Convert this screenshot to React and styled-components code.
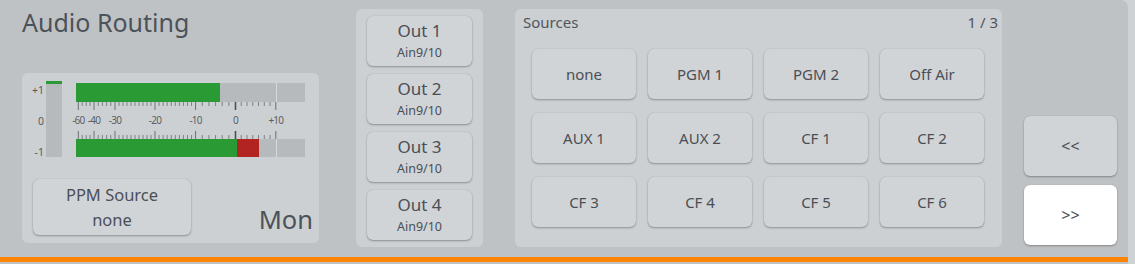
import React from "react";
import styled, { createGlobalStyle } from "styled-components";

const Global = createGlobalStyle`
  html, body {
    margin: 0;
    padding: 0;
    background: #cfd2d4;
    font-family: "Noto Sans", "Open Sans", sans-serif;
    color: #4a4f56;
  }
`;

const Frame = styled.div`
  width: 1128px;
  height: 264px;
  background: #bfc2c4;
  border-top-right-radius: 7px;
  display: flex;
  flex-direction: column;
`;

const Main = styled.div`
  height: 257px;
  display: flex;
  box-sizing: border-box;
  padding: 9px 0 10px 22px;
`;

const Accent = styled.div`
  height: 5px;
  background: #ff8400;
`;

// left
const LeftCol = styled.div`
  width: 297px;
  display: flex;
  flex-direction: column;
  justify-content: space-between;
  margin-top: -2px;
  margin-bottom: 4px;
`;

const Title = styled.h1`
  margin: 0;
  font-size: 25px;
  font-weight: 400;
  line-height: 30px;
  color: #4c5259;
`;

const Panel = styled.div`
  background: #cdd0d2;
  border-radius: 6px;
  box-sizing: border-box;
`;

const MeterPanel = styled(Panel)`
  height: 170px;
  padding: 8px 6px 8px 11px;
  display: flex;
  flex-direction: column;
  justify-content: space-between;
`;

const MeterRow = styled.div`
  display: flex;
  align-items: flex-start;
`;

const VLabels = styled.div`
  width: 11px;
  height: 76px;
  display: flex;
  flex-direction: column;
  justify-content: space-between;
  align-items: flex-end;
  font-size: 10.5px;
  line-height: 10px;
  color: #555a61;
  padding-top: 4px;
  box-sizing: border-box;
  margin-right: 2px;
`;

const VBar = styled.div`
  width: 16px;
  height: 76px;
  background: #b7babc;
  border-top: 3px solid #2a9a34;
  box-sizing: border-box;
  margin-right: 14px;
`;

const HMeter = styled.div`
  width: 229px;
  margin-top: 2px;
`;

const Bar = styled.div`
  height: ${(p) => p.$h}px;
  display: flex;
  background: #b7babc;
`;

const Fill = styled.div`
  height: 100%;
  background: ${(p) => p.$color};
`;

const Divider = styled.div`
  margin-left: auto;
  width: 1px;
  height: 100%;
  background: #d6d8da;
  margin-right: 28px;
`;

const ScaleSvg = styled.svg`
  display: block;
  overflow: visible;
`;

const BottomRow = styled.div`
  display: flex;
  justify-content: space-between;
  align-items: flex-end;
`;

const Button = styled.div`
  background: ${(p) => (p.$active ? "#ffffff" : "#d1d4d6")};
  border-radius: 6px;
  box-shadow: 0 1px 2px rgba(0, 0, 0, 0.3), 0 0 1px rgba(0, 0, 0, 0.18);
  display: flex;
  flex-direction: column;
  align-items: center;
  justify-content: center;
  color: #4a4f56;
  box-sizing: border-box;
`;

const PpmButton = styled(Button)`
  width: 158px;
  height: 56px;
  font-size: 16.5px;
  line-height: 25px;
`;

const Mon = styled.div`
  font-size: 25.5px;
  line-height: 27px;
  color: #4c5259;
  margin-bottom: 2px;
`;

// outs
const OutPanel = styled(Panel)`
  width: 127px;
  margin-left: 37px;
  padding: 7px 11px;
  display: flex;
  flex-direction: column;
  gap: 8px;
`;

const OutButton = styled(Button)`
  height: 50px;
  padding-bottom: 1px;
`;

const OutName = styled.div`
  font-size: 17px;
  line-height: 24px;
`;

const OutSub = styled.div`
  font-size: 12.5px;
  line-height: 19px;
`;

// sources
const SourcePanel = styled(Panel)`
  width: 487px;
  margin-left: 32px;
  padding: 4px 4px 0 17px;
`;

const SourceHead = styled.div`
  display: flex;
  justify-content: space-between;
  font-size: 15px;
  line-height: 18px;
  color: #50555c;
  margin-left: -9px;
  margin-bottom: 18px;
`;

const Grid = styled.div`
  display: grid;
  grid-template-columns: repeat(4, 104px);
  grid-auto-rows: 50px;
  column-gap: 12px;
  row-gap: 14px;
`;

const SourceButton = styled(Button)`
  font-size: 15px;
`;

// nav
const NavCol = styled.div`
  width: 93px;
  margin-left: 22px;
  display: flex;
  flex-direction: column;
  justify-content: flex-end;
  gap: 9px;
  padding-bottom: 2px;
`;

const NavButton = styled(Button)`
  height: 60px;
  font-size: 16px;
`;

const majors = [
  { x: 2.3, label: "-60" },
  { x: 18, label: "-40" },
  { x: 39, label: "-30" },
  { x: 79, label: "-20" },
  { x: 119.6, label: "-10" },
  { x: 159.5, label: "0" },
  { x: 199.8, label: "+10" },
];
const divisions = [4, 5, 10, 10, 6, 7];

const ticks = [];
majors.slice(0, -1).forEach((m, i) => {
  const next = majors[i + 1].x;
  const n = divisions[i];
  for (let k = 1; k < n; k++) ticks.push(m.x + ((next - m.x) * k) / n);
});

const Scale = () => (
  <ScaleSvg width="229" height="37">
    {ticks.map((x) => (
      <g key={x} stroke="#7d8187" strokeWidth="1">
        <line x1={x} x2={x} y1="0" y2="4" />
        <line x1={x} x2={x} y1="33" y2="37" />
      </g>
    ))}
    {majors.map((m) => {
      const zero = m.label === "0";
      const stroke = zero ? "#4d5157" : "#6c7076";
      return (
        <g key={m.label}>
          <line x1={m.x} x2={m.x} y1="0" y2="8" stroke={stroke} strokeWidth={zero ? 1.6 : 1} />
          <line x1={m.x} x2={m.x} y1="29" y2="37" stroke={stroke} strokeWidth={zero ? 1.6 : 1} />
          <text
            x={m.x}
            y="22"
            textAnchor="middle"
            fontSize="10"
            fill="#5a5f65"
            fontFamily="Noto Sans, sans-serif"
            letterSpacing="-0.8"
          >
            {m.label}
          </text>
        </g>
      );
    })}
  </ScaleSvg>
);

const sources = [
  "none", "PGM 1", "PGM 2", "Off Air",
  "AUX 1", "AUX 2", "CF 1", "CF 2",
  "CF 3", "CF 4", "CF 5", "CF 6",
];

const outs = ["Out 1", "Out 2", "Out 3", "Out 4"];

export default function App() {
  return (
    <>
      <Global />
      <Frame>
        <Main>
          <LeftCol>
            <Title>Audio Routing</Title>
            <MeterPanel>
              <MeterRow>
                <VLabels>
                  <span>+1</span>
                  <span>0</span>
                  <span>-1</span>
                </VLabels>
                <VBar />
                <HMeter>
                  <Bar $h={19}>
                    <Fill $color="#2a9a34" style={{ width: 144 }} />
                    <Divider />
                  </Bar>
                  <Scale />
                  <Bar $h={18}>
                    <Fill $color="#2a9a34" style={{ width: 161 }} />
                    <Fill $color="#b22421" style={{ width: 22 }} />
                    <Divider />
                  </Bar>
                </HMeter>
              </MeterRow>
              <BottomRow>
                <PpmButton>
                  <span>PPM Source</span>
                  <span>none</span>
                </PpmButton>
                <Mon>Mon</Mon>
              </BottomRow>
            </MeterPanel>
          </LeftCol>

          <OutPanel>
            {outs.map((o) => (
              <OutButton key={o}>
                <OutName>{o}</OutName>
                <OutSub>Ain9/10</OutSub>
              </OutButton>
            ))}
          </OutPanel>

          <SourcePanel>
            <SourceHead>
              <span>Sources</span>
              <span>1 / 3</span>
            </SourceHead>
            <Grid>
              {sources.map((s) => (
                <SourceButton key={s}>{s}</SourceButton>
              ))}
            </Grid>
          </SourcePanel>

          <NavCol>
            <NavButton>&lt;&lt;</NavButton>
            <NavButton $active>&gt;&gt;</NavButton>
          </NavCol>
        </Main>
        <Accent />
      </Frame>
    </>
  );
}
